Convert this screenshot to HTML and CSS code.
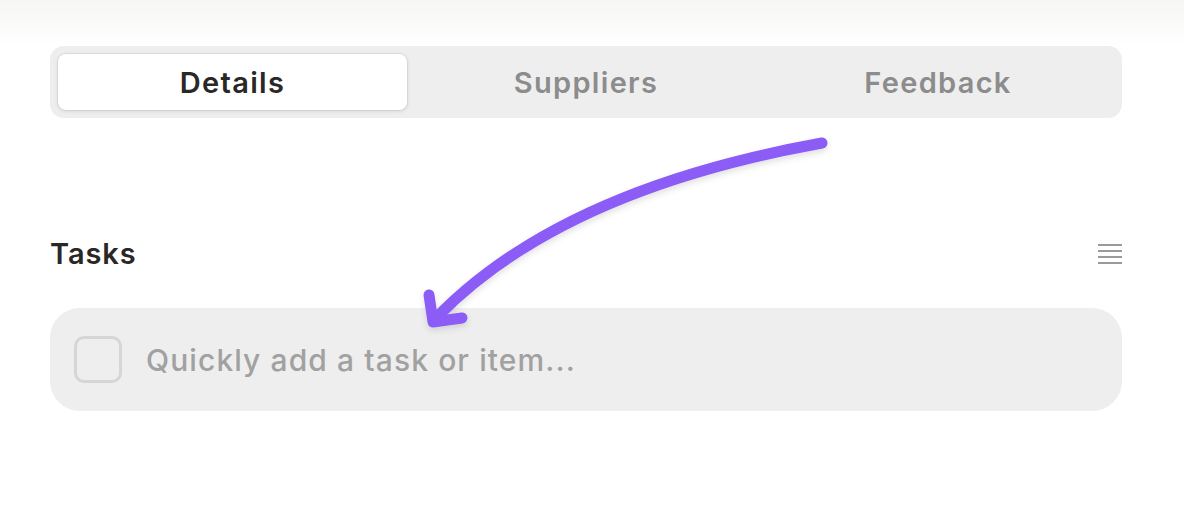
FILE: index.html
```html
<!DOCTYPE html>
<html>
<head>
<meta charset="utf-8">
<link rel="stylesheet" href="styles.css">
</head>
<body>
<div class="page">
  <div class="topfade"></div>
  <div class="content">
    <div class="tabs">
      <div class="tab active">Details</div>
      <div class="tab">Suppliers</div>
      <div class="tab">Feedback</div>
    </div>
    <div class="section-head">
      <h2 class="title">Tasks</h2>
      <svg class="menu-icon" width="24" height="22" viewBox="0 0 24 22">
        <rect x="0" y="1" width="24" height="2" fill="#9a9a9a"/>
        <rect x="0" y="7" width="24" height="2" fill="#9a9a9a"/>
        <rect x="0" y="13" width="24" height="2" fill="#9a9a9a"/>
        <rect x="0" y="19" width="24" height="2" fill="#9a9a9a"/>
      </svg>
    </div>
    <div class="quick-add">
      <div class="checkbox"></div>
      <div class="placeholder">Quickly add a task or item...</div>
    </div>
  </div>
  <svg class="arrow" width="1184" height="524" viewBox="0 0 1184 524">
    <defs>
      <filter id="sh" x="-10%" y="-10%" width="120%" height="130%">
        <feDropShadow dx="0" dy="3" stdDeviation="3" flood-color="#000" flood-opacity="0.12"/>
      </filter>
    </defs>
    <g filter="url(#sh)" fill="none" stroke="#8b5cf6" stroke-width="11" stroke-linecap="round" stroke-linejoin="round">
      <path d="M 822 143 Q 560 190 436 318"/>
      <path d="M 429 295 L 433 322 L 462 318"/>
    </g>
  </svg>
</div>
</body>
</html>
```
FILE: styles.css
```css
* { box-sizing: border-box; }
html, body {
  margin: 0;
  padding: 0;
  background: #ffffff;
}
body {
  font-family: Inter, "Noto Sans", "Liberation Sans", sans-serif;
}
.page {
  position: relative;
  width: 1184px;
  height: 524px;
  overflow: hidden;
}
.topfade {
  height: 46px;
  background: linear-gradient(to bottom, #f6f6f5 0%, #fafaf9 50%, #ffffff 100%);
}
.content {
  margin-left: 50px;
  width: 1072px;
}
.tabs {
  display: grid;
  grid-template-columns: 1fr 1fr 1fr;
  height: 72px;
  padding: 8px;
  background: #eeeeee;
  border-radius: 14px;
}
.tab {
  display: flex;
  align-items: center;
  justify-content: center;
  font-size: 29px;
  font-weight: 600;
  color: #8c8c8c;
  letter-spacing: 1.3px;
}
.tab.active {
  background: #ffffff;
  color: #2a2826;
  border-radius: 8px;
  margin-right: 3px;
  box-shadow: 0 1px 4px rgba(0,0,0,0.12), 0 0 0 1px rgba(200,190,180,0.25);
}
.section-head {
  display: flex;
  justify-content: space-between;
  align-items: center;
  margin-top: 115px;
  height: 40px;
}
.title {
  margin: 0;
  font-size: 29px;
  font-weight: 600;
  color: #2a2826;
  letter-spacing: 0.9px;
}
.menu-icon {
  display: block;
  margin-top: 1px;
}
.quick-add {
  display: flex;
  align-items: center;
  margin-top: 35px;
  height: 103px;
  padding-left: 24px;
  background: #eeeeee;
  border-radius: 30px;
}
.checkbox {
  width: 48px;
  height: 47px;
  border: 3px solid #d6d6d6;
  border-radius: 10px;
  flex: none;
}
.placeholder {
  margin-left: 24px;
  font-size: 30px;
  font-weight: 500;
  color: #a1a1a1;
  letter-spacing: 1.1px;
}
.arrow {
  position: absolute;
  left: 0;
  top: 0;
  pointer-events: none;
}
```
